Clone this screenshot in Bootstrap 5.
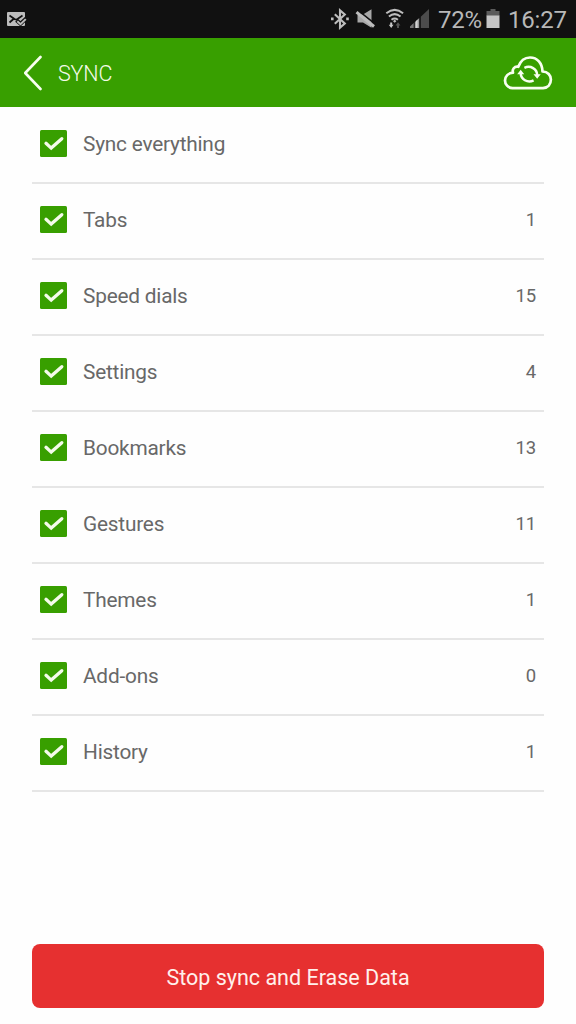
<!DOCTYPE html>
<html lang="en">
<head>
<meta charset="utf-8">
<meta name="viewport" content="width=device-width, initial-scale=1">
<title>Sync</title>
<link href="https://cdn.jsdelivr.net/npm/bootstrap@5.3.0/dist/css/bootstrap.min.css" rel="stylesheet">
<style>
  body { font-family: Roboto, sans-serif; background: #fefefe; color: #686868; height: 1024px; overflow: hidden; }
  svg { display: block; flex: none; }
  .status-bar { height: 38px; background: #111; color: #b8b8b8; padding: 0 8px 0 6px; }
  .status-text { font-size: 24px; line-height: 38px; padding-top: 1px; white-space: nowrap; }
  .status-pct { width: 44px; letter-spacing: -.2px; }
  .status-clock { width: 60px; letter-spacing: -.2px; }
  .app-bar { height: 69px; background: #389f00; color: #f4fbe9; padding: 0 23px 0 24px; }
  .app-title { font-size: 21.5px; font-weight: 300; line-height: 28px; padding-top: 3px; letter-spacing: -.15px; }
  .sync-list { margin: 1px 32px 0; }
  .sync-row { height: 76px; border-bottom: 2px solid #e6e6e6; padding: 0 8px 4px; }
  .sync-label { font-size: 20.8px; line-height: 28px; margin-left: 16px; padding-top: 2px; letter-spacing: -.2px; }
  .sync-count { font-size: 18.5px; line-height: 28px; padding-top: 1px; letter-spacing: -.2px; }
  .erase-btn, .erase-btn:hover { height: 64px; margin: 0 32px 16px; border: 0; border-radius: 8px; background: #e63030; color: #fff0ec; font-size: 21.5px; padding: 4px 0 0; }
</style>
</head>
<body class="d-flex flex-column">
<svg width="0" height="0" class="position-absolute" aria-hidden="true">
  <symbol id="check" viewBox="0 0 27 27">
    <rect width="27" height="27" rx="1.5" fill="#389f00"/>
    <path d="M6 13.300l5.200 4.800 10.600-9.400" fill="none" stroke="#f4fbea" stroke-width="3.300" stroke-linecap="round"/>
  </symbol>
</svg>

<header class="status-bar d-flex align-items-center">
  <svg width="22" height="38" viewBox="0 0 22 38">
    <rect x="1" y="12" width="18" height="14" rx="1" fill="#bdbdbd"/>
    <path d="M3.500 15.500l5 3.500q1.500 1 3 0l5-3.500M3.500 22.500l4-3.500" fill="none" stroke="#111" stroke-width="1.700"/>
    <path d="M10.500 20.300l4 3.500 5.800-5.400" fill="none" stroke="#111" stroke-width="4"/>
    <path d="M11.300 21.300l3.200 2.900 5.300-5.100" fill="none" stroke="#bdbdbd" stroke-width="2"/>
  </svg>
  <svg class="ms-auto" width="108" height="38" viewBox="330 0 108 38">
    <g fill="none" stroke="#bdbdbd" stroke-width="2.100">
      <path d="M334.800 14.200l10 9.300-4.800 4.100V10.400l4.800 4.100-10 9.300"/>
    </g>
    <path d="M331 17.600h2.600v2.600H331zM346.200 17.600h2.600v2.600h-2.600z" fill="#bdbdbd"/>
    <path d="M357.500 14.500h5.500l8.500-5.300v18.600l-8.500-5.300h-5.500z" fill="#a8a8a8"/>
    <path d="M357.800 10.200l17.500 14" stroke="#111" stroke-width="1.500"/>
    <path d="M356.500 12.200l17.500 14.300" stroke="#bdbdbd" stroke-width="3"/>
    <g fill="none" stroke="#bdbdbd" stroke-width="2">
      <path d="M386.300 13.300q8.400-6.800 16.800 0M388.900 16.500q5.800-4.700 11.600 0M391.500 19.700q3.200-2.500 6.400 0"/>
    </g>
    <path d="M394.700 19.500l1.700 1.700-1.700 1.600-1.700-1.600z" fill="#bdbdbd"/>
    <path d="M390.200 22.500h2v2.300h1.300L391.200 28l-2.400-3.200h1.400z" fill="#c8c8c8"/>
    <path d="M397 28v-2.600h-1.400l2.400-3.200 2.400 3.200H399V28z" fill="#555"/>
    <path d="M420.800 16.800L429 9v19h-8.200z" fill="#4c4c4c"/>
    <path d="M410 26.500l3.700-3.400V28H410z" fill="#777"/>
    <path d="M414.800 22.200l4.400-4.200v10h-4.400z" fill="#999"/>
    <path d="M415.800 21.300l1.800-1.800V28h-1.800z" fill="#d2d2d2"/>
  </svg>
  <span class="status-text status-pct">72%</span>
  <svg width="26" height="38" viewBox="0 0 26 38">
    <path d="M8.500 9h5v2h4v5h-13v-5h4z" fill="#5c5c5c"/>
    <path d="M4.500 15.500h13V28h-13z" fill="#c6c6c6"/>
  </svg>
  <span class="status-text status-clock">16:27</span>
</header>

<nav class="app-bar d-flex align-items-center">
  <svg width="34" height="69" viewBox="24 38 34 69" fill="none" stroke="#f8fff0" stroke-width="2.600" stroke-linecap="round" stroke-linejoin="round">
    <path d="M40.500 57L25.200 73l15.300 16"/>
  </svg>
  <span class="app-title">SYNC</span>
  <svg class="ms-auto" width="50" height="69" viewBox="503 38 50 69" fill="none" stroke="#f8fff0">
    <path stroke-width="2.700" stroke-linejoin="round" d="M512.500 88.200C508 87.800 505 84.400 505 80.400C505 76.300 508.300 73 513 72.700C511.900 69.500 514.300 66 518.300 66.800C520.500 60.800 525 57.500 530 57.500C537.300 57.500 542.300 63 542.500 71.500C547.800 71.600 550.900 75.300 550.900 79.600C550.900 84.300 547.800 87.800 543 88.200Z"/>
    <path stroke-width="2.500" d="M524.400 67.800C530.600 65 537 69 537.200 75M533.600 80.400C527.600 83.500 520.800 79.300 520.700 73"/>
    <path fill="#f8fff0" stroke="none" d="M533.500 74.300h7.200l-3.500 4.500zM517.200 74.200h7l-3.500-4.500z"/>
  </svg>
</nav>

<main class="sync-list">
  <div class="sync-row d-flex align-items-center"><svg width="27" height="27"><use href="#check"/></svg><span class="sync-label">Sync everything</span></div>
  <div class="sync-row d-flex align-items-center"><svg width="27" height="27"><use href="#check"/></svg><span class="sync-label">Tabs</span><span class="sync-count ms-auto">1</span></div>
  <div class="sync-row d-flex align-items-center"><svg width="27" height="27"><use href="#check"/></svg><span class="sync-label">Speed dials</span><span class="sync-count ms-auto">15</span></div>
  <div class="sync-row d-flex align-items-center"><svg width="27" height="27"><use href="#check"/></svg><span class="sync-label">Settings</span><span class="sync-count ms-auto">4</span></div>
  <div class="sync-row d-flex align-items-center"><svg width="27" height="27"><use href="#check"/></svg><span class="sync-label">Bookmarks</span><span class="sync-count ms-auto">13</span></div>
  <div class="sync-row d-flex align-items-center"><svg width="27" height="27"><use href="#check"/></svg><span class="sync-label">Gestures</span><span class="sync-count ms-auto">11</span></div>
  <div class="sync-row d-flex align-items-center"><svg width="27" height="27"><use href="#check"/></svg><span class="sync-label">Themes</span><span class="sync-count ms-auto">1</span></div>
  <div class="sync-row d-flex align-items-center"><svg width="27" height="27"><use href="#check"/></svg><span class="sync-label">Add-ons</span><span class="sync-count ms-auto">0</span></div>
  <div class="sync-row d-flex align-items-center"><svg width="27" height="27"><use href="#check"/></svg><span class="sync-label">History</span><span class="sync-count ms-auto">1</span></div>
</main>

<button type="button" class="btn erase-btn mt-auto">Stop sync and Erase Data</button>
<script src="https://cdn.jsdelivr.net/npm/bootstrap@5.3.0/dist/js/bootstrap.bundle.min.js"></script>
</body>
</html>
